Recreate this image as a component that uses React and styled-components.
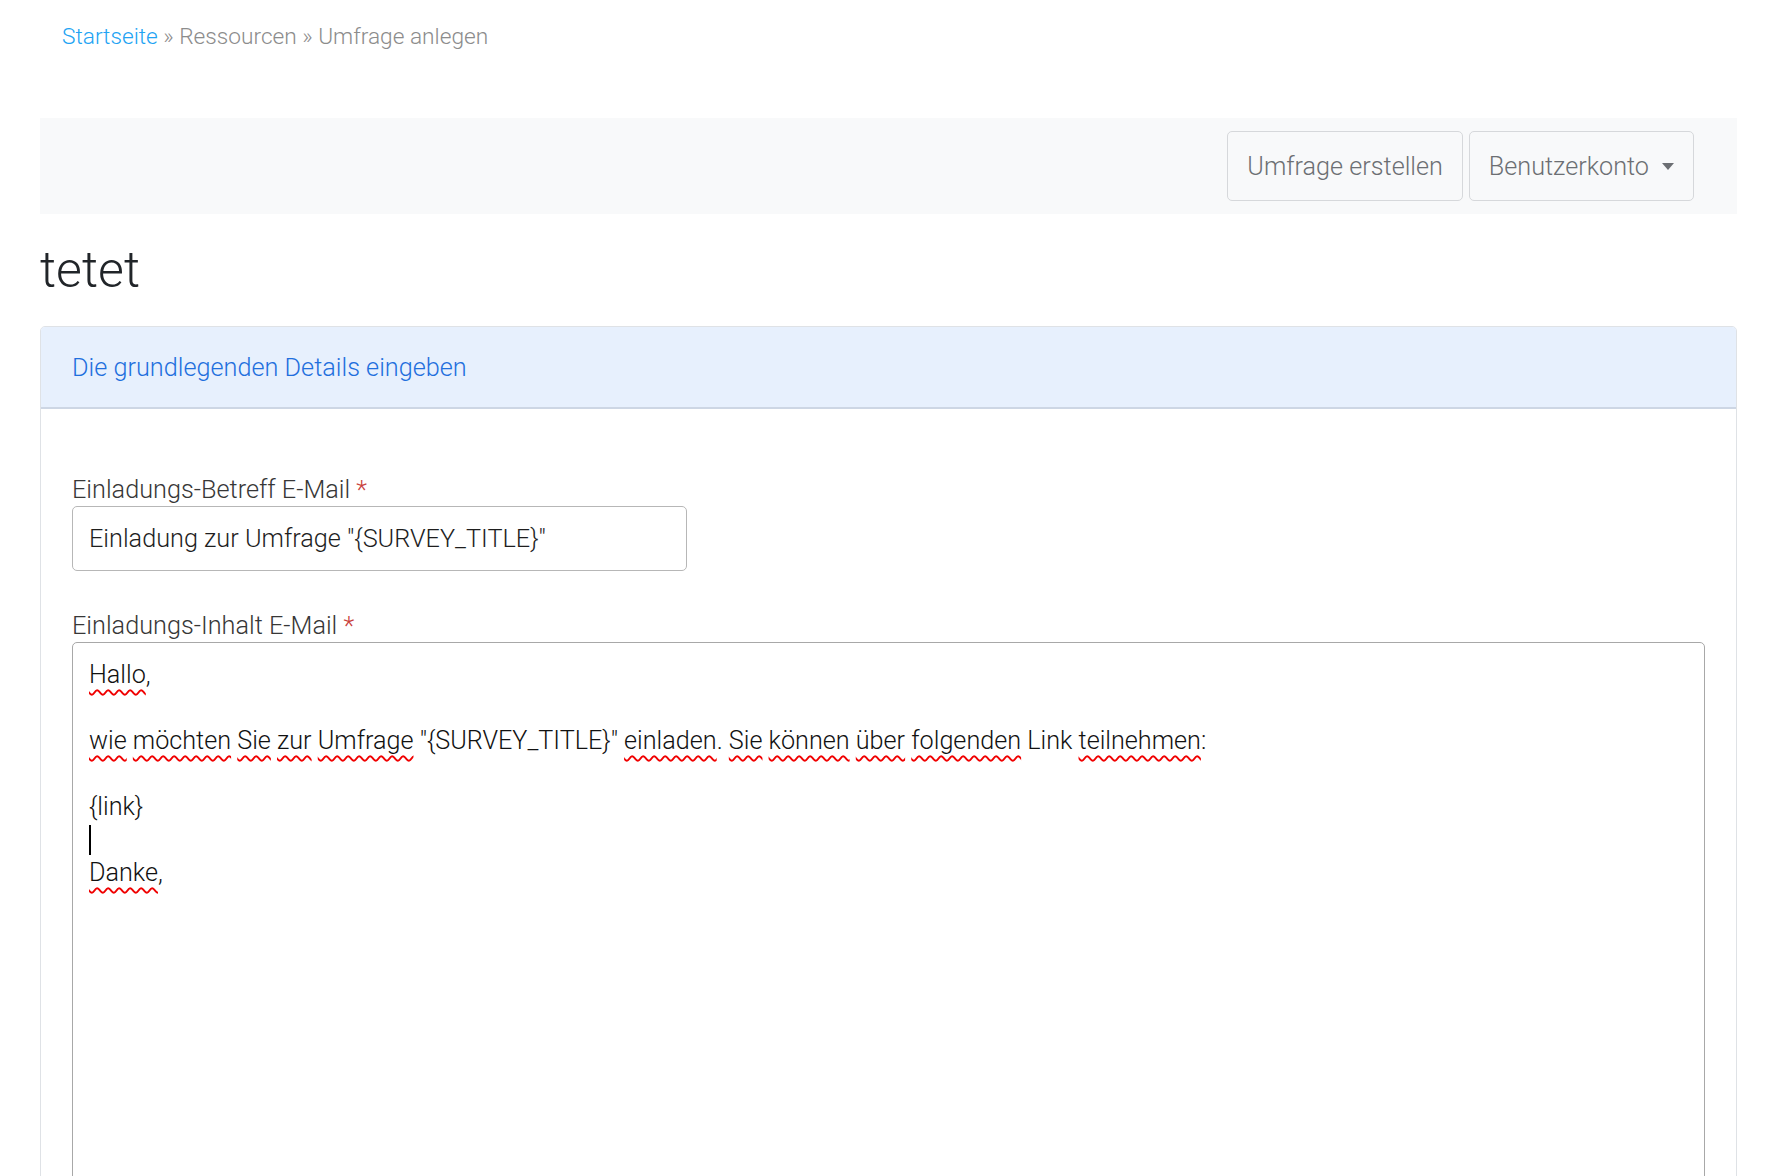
import React from "react";
import styled, { createGlobalStyle } from "styled-components";

const GlobalStyle = createGlobalStyle`
  body {
    margin: 0;
    background: #fff;
    font-family: Roboto, "Liberation Sans", sans-serif;
    font-weight: 300;
    font-size: 22px;
    color: #212529;
  }
`;

const Page = styled.div`
  padding: 20px 29px 0 40px;
`;

const Breadcrumb = styled.div`
  padding-left: 22px;
  font-size: 22.7px;
  line-height: 33px;
  color: #8c8c8c;
  margin-bottom: 65px;
`;

const Crumb = styled.a`
  color: #22a3f3;
  text-decoration: none;
`;

const Navbar = styled.nav`
  height: 96px;
  background: #f8f9fa;
  display: flex;
  justify-content: flex-end;
  align-items: center;
  gap: 6px;
  padding-right: 43px;
`;

const NavButton = styled.button`
  height: 70px;
  padding: 0 19px;
  display: flex;
  align-items: center;
  background: transparent;
  border: 1px solid #d6d8db;
  border-radius: 5px;
  font-family: Roboto, "Liberation Sans", sans-serif;
  font-weight: 300;
  font-size: 25.2px;
  color: #6c6f73;
`;

const Caret = styled.span`
  display: inline-block;
  margin-left: 13px;
  border-top: 7px solid #6c6f73;
  border-left: 6px solid transparent;
  border-right: 6px solid transparent;
`;

const Title = styled.h1`
  margin: 27px 0;
  font-size: 50px;
  font-weight: 300;
  line-height: 58px;
  color: #212529;
`;

const Card = styled.section`
  border: 1px solid #dfe2e6;
  border-radius: 5px;
  overflow: hidden;
`;

const CardHeader = styled.header`
  height: 80px;
  display: flex;
  align-items: center;
  padding: 0 31px;
  background: #e7f0fd;
  border-bottom: 2px solid #cdd6e4;
  font-size: 25.25px;
  color: #1f6fdd;
`;

const CardBody = styled.div`
  padding: 64px 31px 0;
`;

const FormGroup = styled.div`
  margin-bottom: 38px;
`;

const Label = styled.label`
  display: block;
  font-size: 25.25px;
  line-height: 33px;
  color: #373737;
`;

const Required = styled.span`
  color: #c9423c;
`;

const TextInput = styled.input`
  box-sizing: border-box;
  width: 615px;
  height: 65px;
  padding: 0 16px;
  border: 1px solid #b7b7b7;
  border-radius: 5px;
  font-family: Roboto, "Liberation Sans", sans-serif;
  font-weight: 300;
  font-size: 25.25px;
  color: #1e1e1e;
  outline: none;
`;

const Editor = styled.div`
  min-height: 640px;
  padding: 15px 16px;
  border: 1px solid #a8a8a8;
  border-radius: 5px;
  font-size: 25.2px;
  line-height: 33px;
  color: #111;
  white-space: pre-wrap;
`;

const Typo = styled.span`
  text-decoration: underline wavy #f00000;
  text-decoration-thickness: 1.5px;
  text-underline-offset: 6px;
  text-decoration-skip-ink: none;
`;

const Cursor = styled.span`
  display: inline-block;
  width: 2px;
  height: 30px;
  background: #000;
  vertical-align: -7px;
`;

const Line = styled.div`
  min-height: 33px;
`;

const words = (text) =>
  text.split(/(\s+)/).map((part, i) => {
    const m = part.match(/^(\*)?(.*?)([.,:]?)$/);
    if (!m[1]) return <React.Fragment key={i}>{part}</React.Fragment>;
    return (
      <React.Fragment key={i}>
        <Typo>{m[2]}</Typo>
        {m[3]}
      </React.Fragment>
    );
  });

const body = [
  "*Hallo,",
  "",
  '*wie *möchten *Sie *zur *Umfrage "{SURVEY_TITLE}" *einladen. *Sie *können *über *folgenden Link *teilnehmen:',
  "",
  "{link}",
  null,
  "*Danke,",
];

export default function App() {
  return (
    <Page>
      <GlobalStyle />
      <Breadcrumb>
        <Crumb href="#">Startseite</Crumb> » Ressourcen » Umfrage anlegen
      </Breadcrumb>
      <Navbar>
        <NavButton>Umfrage erstellen</NavButton>
        <NavButton>
          Benutzerkonto
          <Caret />
        </NavButton>
      </Navbar>
      <Title>tetet</Title>
      <Card>
        <CardHeader>Die grundlegenden Details eingeben</CardHeader>
        <CardBody>
          <FormGroup>
            <Label>
              Einladungs-Betreff E-Mail <Required>*</Required>
            </Label>
            <TextInput defaultValue={'Einladung zur Umfrage "{SURVEY_TITLE}"'} />
          </FormGroup>
          <FormGroup>
            <Label>
              Einladungs-Inhalt E-Mail <Required>*</Required>
            </Label>
            <Editor role="textbox">
              {body.map((line, i) => (
                <Line key={i}>{line === null ? <Cursor /> : words(line)}</Line>
              ))}
            </Editor>
          </FormGroup>
        </CardBody>
      </Card>
    </Page>
  );
}
